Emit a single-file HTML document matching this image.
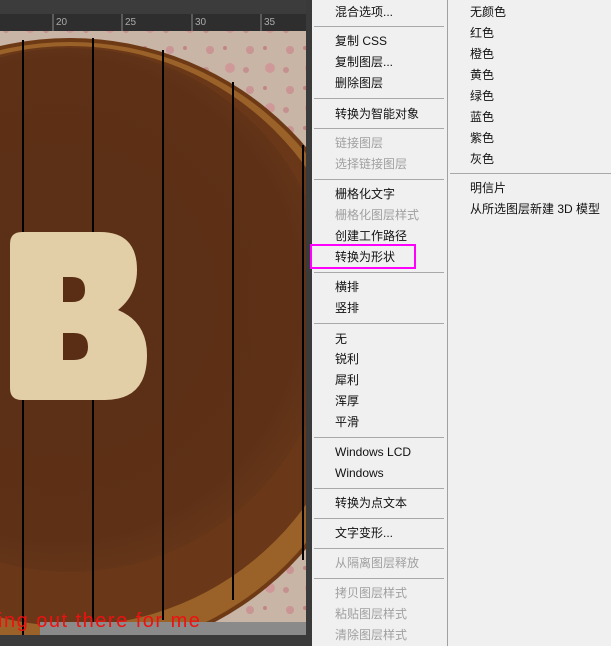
<!DOCTYPE html>
<html><head><meta charset="utf-8"><style>
body{margin:0;width:611px;height:646px;overflow:hidden;background:#f0f0f0;position:relative;font-family:"Liberation Sans","Microsoft YaHei","Noto Sans CJK SC",sans-serif}
.m{position:absolute;font-size:12px;color:#111;line-height:14px}
.g{color:#a0a0a0}
.s{position:absolute;height:1px;background:#a8a8a8}
</style></head><body>
<svg width="312" height="646" style="position:absolute;left:0;top:0">
<defs>
<pattern id="fl" width="40" height="40" patternUnits="userSpaceOnUse">
<rect width="40" height="40" fill="#c9b5a6"/>
<circle cx="10" cy="10" r="4" fill="#c99595"/><circle cx="30" cy="28" r="5" fill="#cf9999"/><circle cx="25" cy="8" r="2" fill="#c08585"/><circle cx="6" cy="30" r="3" fill="#c59090"/>
</pattern>
<radialGradient id="wd" cx="60" cy="300" r="300" gradientUnits="userSpaceOnUse">
<stop offset="0" stop-color="#5a2f15"/><stop offset="0.8" stop-color="#5e3117"/><stop offset="1" stop-color="#6a3818"/>
</radialGradient>
</defs>
<rect x="0" y="0" width="312" height="646" fill="#535353"/>
<rect x="0" y="0" width="312" height="14" fill="#3c3c3c"/>
<rect x="0" y="14" width="306" height="17" fill="#2e2e2e"/>
<g fill="#aaa" font-size="10" font-family="Liberation Sans">
<text x="56" y="25">20</text><text x="125" y="25">25</text><text x="195" y="25">30</text><text x="264" y="25">35</text></g>
<g stroke="#888" stroke-width="1">
<line x1="53" y1="14" x2="53" y2="31"/><line x1="122" y1="14" x2="122" y2="31"/><line x1="192" y1="14" x2="192" y2="31"/><line x1="261" y1="14" x2="261" y2="31"/></g>
<rect x="0" y="31" width="306" height="604" fill="url(#fl)"/>
<circle cx="70" cy="348" r="310" fill="#6e3a16"/>
<circle cx="70" cy="348" r="306" fill="#9a6228"/>
<circle cx="70" cy="336" r="290" fill="#6a3818"/>
<circle cx="70" cy="310" r="262" fill="url(#wd)"/>
<g stroke="#000" stroke-width="2">
<line x1="23" y1="40" x2="23" y2="640"/><line x1="93" y1="38" x2="93" y2="640"/><line x1="163" y1="50" x2="163" y2="620"/><line x1="233" y1="82" x2="233" y2="600"/><line x1="303" y1="145" x2="303" y2="560"/></g>
<path d="M22 232H100Q137 232 137 270Q137 295 118 310Q147 322 147 355Q147 400 105 400H22Q10 400 10 388V244Q10 232 22 232Z" fill="#e3cfa7"/>
<path d="M63 277H72Q85 277 85 290Q85 302 72 302H63Z" fill="#5a2e14"/>
<path d="M63 333H74Q88 333 88 347Q88 360 74 360H63Z" fill="#5a2e14"/>
<rect x="40" y="622" width="266" height="13" fill="#8a8a8a"/>
<text x="-2" y="627" fill="#ee1111" font-size="20" font-family="Liberation Sans" letter-spacing="1.5">ing out there for me</text>
<rect x="0" y="635" width="306" height="11" fill="#3a3a3a"/>
<rect x="306" y="0" width="6" height="646" fill="#3a3a3a"/>
</svg>
<div style="position:absolute;left:447px;top:0;width:1px;height:646px;background:#a0a0a0"></div>
<div class="m" style="left:335px;top:5px">混合选项...</div>
<div class="s" style="left:314px;top:26px;width:130px"></div>
<div class="m" style="left:335px;top:34px">复制 CSS</div>
<div class="m" style="left:335px;top:55px">复制图层...</div>
<div class="m" style="left:335px;top:76px">删除图层</div>
<div class="s" style="left:314px;top:98px;width:130px"></div>
<div class="m" style="left:335px;top:107px">转换为智能对象</div>
<div class="s" style="left:314px;top:128px;width:130px"></div>
<div class="m g" style="left:335px;top:136px">链接图层</div>
<div class="m g" style="left:335px;top:157px">选择链接图层</div>
<div class="s" style="left:314px;top:179px;width:130px"></div>
<div class="m" style="left:335px;top:187px">栅格化文字</div>
<div class="m g" style="left:335px;top:208px">栅格化图层样式</div>
<div class="m" style="left:335px;top:229px">创建工作路径</div>
<div class="m" style="left:335px;top:250px">转换为形状</div>
<div style="position:absolute;left:310px;top:244px;width:102px;height:21px;border:2px solid #f0f"></div>
<div class="s" style="left:314px;top:272px;width:130px"></div>
<div class="m" style="left:335px;top:280px">横排</div>
<div class="m" style="left:335px;top:301px">竖排</div>
<div class="s" style="left:314px;top:323px;width:130px"></div>
<div class="m" style="left:335px;top:332px">无</div>
<div class="m" style="left:335px;top:352px">锐利</div>
<div class="m" style="left:335px;top:373px">犀利</div>
<div class="m" style="left:335px;top:394px">浑厚</div>
<div class="m" style="left:335px;top:415px">平滑</div>
<div class="s" style="left:314px;top:437px;width:130px"></div>
<div class="m" style="left:335px;top:445px">Windows LCD</div>
<div class="m" style="left:335px;top:466px">Windows</div>
<div class="s" style="left:314px;top:488px;width:130px"></div>
<div class="m" style="left:335px;top:496px">转换为点文本</div>
<div class="s" style="left:314px;top:518px;width:130px"></div>
<div class="m" style="left:335px;top:526px">文字变形...</div>
<div class="s" style="left:314px;top:548px;width:130px"></div>
<div class="m g" style="left:335px;top:556px">从隔离图层释放</div>
<div class="s" style="left:314px;top:578px;width:130px"></div>
<div class="m g" style="left:335px;top:586px">拷贝图层样式</div>
<div class="m g" style="left:335px;top:607px">粘贴图层样式</div>
<div class="m g" style="left:335px;top:628px">清除图层样式</div>
<div class="m" style="left:470px;top:5px">无颜色</div>
<div class="m" style="left:470px;top:26px">红色</div>
<div class="m" style="left:470px;top:47px">橙色</div>
<div class="m" style="left:470px;top:68px">黄色</div>
<div class="m" style="left:470px;top:89px">绿色</div>
<div class="m" style="left:470px;top:110px">蓝色</div>
<div class="m" style="left:470px;top:131px">紫色</div>
<div class="m" style="left:470px;top:152px">灰色</div>
<div class="s" style="left:450px;top:173px;width:161px"></div>
<div class="m" style="left:470px;top:181px">明信片</div>
<div class="m" style="left:470px;top:202px">从所选图层新建 3D 模型</div>
</body></html>
